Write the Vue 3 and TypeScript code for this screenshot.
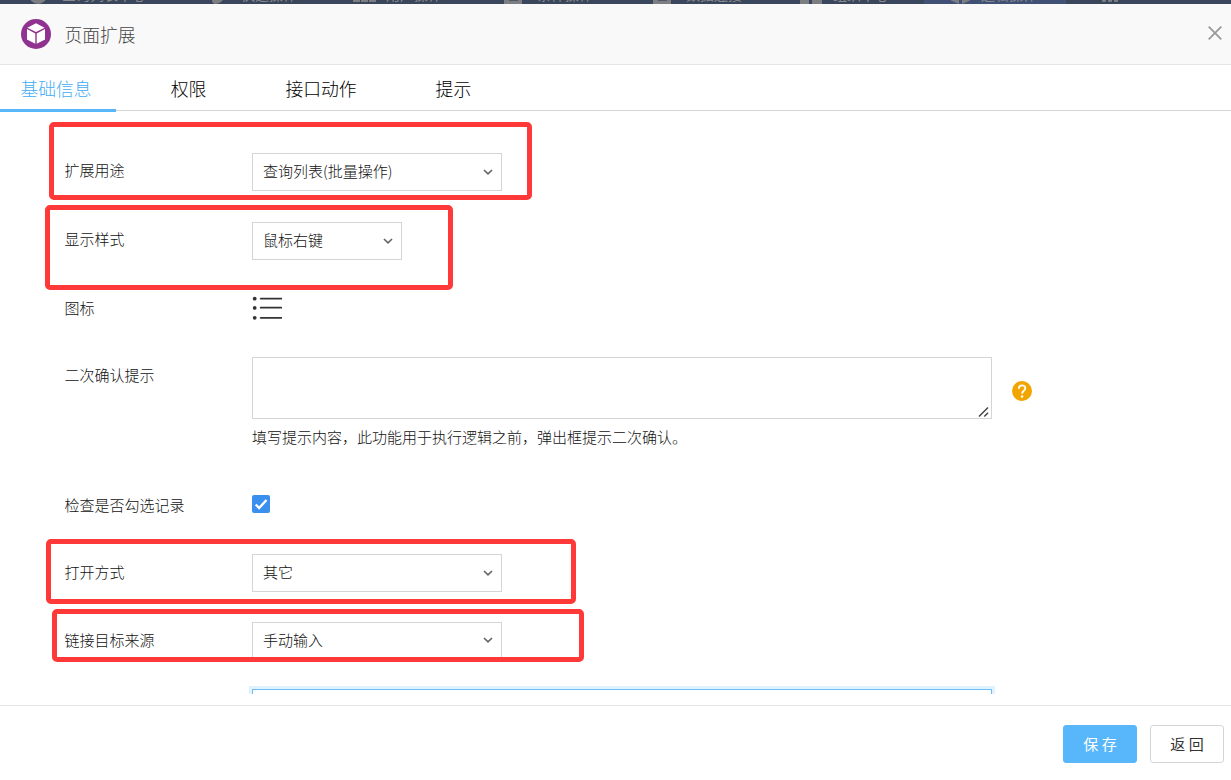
<script setup lang="ts">
import { ref } from 'vue'

interface NavItem { label: string; kind: string; active?: boolean; start: number }

const navItems: NavItem[] = [
  { label: '查询列表中心', kind: 'dot', start: 29 },
  { label: '快速操作', kind: 'tag', start: 208 },
  { label: '用户操作', kind: 'grid', start: 353 },
  { label: '条件操作', kind: 'box', start: 504 },
  { label: '数据连接', kind: 'box', start: 653 },
  { label: '组织中心', kind: 'bars', start: 800 },
  { label: '逻辑操作', kind: 'cube', active: true, start: 924 },
  { label: '', kind: 'flow', start: 1101 },
]

const tabs = ['基础信息', '权限', '接口动作', '提示']
const currentTab = ref('基础信息')
const prompt = ref('')
const target = ref('')
const mustSelect = ref(true)
</script>

<template>
  <div class="page">
    <nav class="backdrop">
      <div v-for="n in navItems" :key="n.start" class="nav-item" :class="[n.kind, { active: n.active }]" :style="{ left: n.start + 'px' }">
        <i class="nav-icon"></i><span>{{ n.label }}</span>
      </div>
    </nav>

    <header class="header">
      <svg class="logo" viewBox="0 0 30 30">
        <circle cx="15" cy="15" r="15" fill="#8f3290" />
        <path d="M15 4.2 23.6 8.7 15 13.1 6.4 8.7Z" fill="#fff" />
        <path d="M6 10 14.3 14.4V24.7L6 20.5ZM24 10 15.7 14.4V24.7L24 20.5Z" fill="#fff" />
      </svg>
      <h1>页面扩展</h1>
      <svg class="close" viewBox="0 0 14 14"><path d="M.7.7 13.3 13.3M13.3.7.7 13.3" fill="none" stroke="#999" stroke-width="1.8" /></svg>
    </header>

    <div class="tabs">
      <button v-for="t in tabs" :key="t" class="tab" :class="{ on: t === currentTab }" @click="currentTab = t">{{ t }}</button>
    </div>

    <main class="form">
      <div class="row r1">
        <label>扩展用途</label>
        <div class="select">查询列表(批量操作)<svg viewBox="0 0 10 6"><path d="M1 1 5 4.8 9 1" /></svg></div>
      </div>
      <div class="row r2">
        <label>显示样式</label>
        <div class="select short">鼠标右键<svg viewBox="0 0 10 6"><path d="M1 1 5 4.8 9 1" /></svg></div>
      </div>
      <div class="row r3">
        <label>图标</label>
        <svg class="list-icon" viewBox="0 0 30 24">
          <g fill="#333"><circle cx="2.7" cy="2.7" r="1.9" /><circle cx="2.7" cy="11.9" r="1.9" /><circle cx="2.7" cy="21.8" r="1.9" /></g>
          <path d="M8.7 2.6H29.4M8.7 11.7H29.4M8.7 21.8H29.4" stroke="#333" stroke-width="1.8" stroke-linecap="round" />
        </svg>
      </div>
      <div class="row r4">
        <label>二次确认提示</label>
        <div class="prompt">
          <div class="area">
            <textarea v-model="prompt"></textarea>
            <svg class="grip" viewBox="0 0 12 12"><path d="M1 10.5 10 1.5M6.3 10.5 10 6.8" fill="none" stroke="#444" stroke-width="1.5" /></svg>
          </div>
          <p>填写提示内容，此功能用于执行逻辑之前，弹出框提示二次确认。</p>
        </div>
        <svg class="help" viewBox="0 0 20 20">
          <circle cx="10" cy="10" r="10" fill="#f2a500" />
          <path d="M6.8 7.7C6.8 3.2 13.3 3.4 13.3 7.2 13.3 9.8 10.1 9.8 10.1 12.8" fill="none" stroke="#fff" stroke-width="1.8" />
          <circle cx="10.1" cy="15.4" r="1.25" fill="#fff" />
        </svg>
      </div>
      <div class="row r5">
        <label>检查是否勾选记录</label>
        <button class="check" @click="mustSelect = !mustSelect">
          <svg v-if="mustSelect" viewBox="0 0 18 18"><path d="M3.7 9.5 7.1 13 14.5 5" fill="none" stroke="#fff" stroke-width="2.4" /></svg>
        </button>
      </div>
      <div class="row r6">
        <label>打开方式</label>
        <div class="select">其它<svg viewBox="0 0 10 6"><path d="M1 1 5 4.8 9 1" /></svg></div>
      </div>
      <div class="row r7">
        <label>链接目标来源</label>
        <div class="select">手动输入<svg viewBox="0 0 10 6"><path d="M1 1 5 4.8 9 1" /></svg></div>
      </div>
      <div class="row r8">
        <label></label>
        <textarea v-model="target" class="focused"></textarea>
      </div>
    </main>

    <footer class="footer">
      <button class="btn primary">保 存</button>
      <button class="btn">返 回</button>
    </footer>

    <div class="mark m1"></div>
    <div class="mark m2"></div>
    <div class="mark m3"></div>
    <div class="mark m4"></div>
  </div>
</template>

<style>
html, body { margin: 0; overflow: hidden; }
</style>

<style scoped>
* { box-sizing: border-box; }
.page {
  position: relative; width: 1231px; height: 780px; overflow: hidden; background: #fff;
  display: flex; flex-direction: column;
  font: 300 15px/20px "Noto Sans CJK SC", "Liberation Sans", sans-serif; color: #111;
}
button { font: inherit; border: 0; background: none; padding: 0; }
.backdrop { position: relative; flex: none; height: 4px; background: #39465b; overflow: hidden; }
.nav-item { position: absolute; bottom: 0; height: 40px; font-size: 14px; font-weight: 400; color: #898a8b; white-space: nowrap; }
.nav-item span { position: absolute; left: 33px; bottom: 0; line-height: 20px; }
.nav-icon { position: absolute; left: 0; bottom: 0; width: 18px; height: 16px; background: #7c7e82; border-radius: 0 0 9px 9px; }
.tag .nav-icon { left: 4px; width: 12px; border-radius: 0 0 9px 4px; }
.grid .nav-icon { bottom: 2px; width: 24px; border-radius: 0; background: repeating-linear-gradient(90deg, #7c7e82 0 7px, #39465b 7px 8px); }
.box .nav-icon { border-radius: 0; background: linear-gradient(#4f5869, #4f5869) 5px 12px / 9px 1px no-repeat, #7c7e82; }
.bars .nav-icon { width: 22px; border-radius: 0; background: linear-gradient(90deg, #7c7e82 0 9px, #39465b 9px 12px, #7c7e82 12px); }
.nav-item.active { width: 142px; background: #415176; }
.active span { left: 57px; }
.active .nav-icon { left: 27px; width: 19px; height: 4px; border-radius: 0; clip-path: polygon(0 0, 8px 0, 8px 100%, 0 10%, 0 0, 11px 0, 19px 0, 19px 10%, 11px 100%, 11px 0); }
.flow .nav-icon { bottom: 2px; height: 4px; background: radial-gradient(circle, #7c7e82 2px, transparent 2.5px) 0 0 / 6px 4px; border-radius: 0; }
.header {
  flex: none; height: 61px; display: flex; align-items: center; padding: 0 9px 0 21px;
  background: #f9f9f9; border-bottom: 1px solid #e6e6e6;
}
.logo { width: 30px; height: 30px; }
h1 { margin: 0 auto 1px 13.5px; font-size: 17.8px; font-weight: 300; line-height: 24px; color: #444; }
.close { width: 14px; height: 14px; margin-bottom: 3px; }
.tabs { flex: none; display: flex; height: 46px; border-bottom: 1px solid #d5d5d5; gap: 34.2px; }
.tab { height: 47px; padding: 2px 24.4px 1px 20.5px; font-size: 17.8px; line-height: 24px; color: #000; border-bottom: 3px solid transparent; white-space: nowrap; }
.tab.on { color: #45adf5; border-color: #58b7fa; }
.form { flex: none; height: 583px; padding-top: 42px; overflow: hidden; }
.row { display: flex; align-items: flex-start; }
.row > label { flex: none; width: 187.5px; margin-left: 64.5px; padding-top: 7px; height: 27px; white-space: nowrap; }
.r1, .r2 { height: 69px; }
.r3 { height: 66px; }
.r4 { height: 127px; }
.r5 { height: 70px; }
.r6 { height: 68px; }
.r7 { height: 67px; }
.row.r4 > label, .row.r6 > label, .row.r7 > label { padding-top: 8px; }
.row.r5 > label { padding-top: 11px; }
.select {
  width: 250px; height: 38px; padding: 0 8px 2px 10px; border: 1px solid #d5d5d5; background: #fff;
  display: flex; align-items: center; justify-content: space-between; line-height: 20px;
}
.select.short { width: 150px; }
.select svg { width: 10px; height: 6px; margin-top: 2px; fill: none; stroke: #666; stroke-width: 1.7; }
.r7 .select svg { margin-top: 0; }
.list-icon { width: 30px; height: 24px; margin-top: 5px; }
.prompt { width: 740px; }
.area { position: relative; height: 62px; }
textarea { display: block; width: 740px; height: 62px; border: 1px solid #d5d5d5; resize: none; outline: 0; background: #fff; }
.grip { position: absolute; right: 2px; bottom: 1px; width: 12px; height: 12px; }
.prompt p { margin: 8px 0 0; line-height: 20px; }
.help { width: 20px; height: 20px; margin: 24px 0 0 20px; }
.check { width: 18px; height: 18px; margin-top: 11px; background: #3b8fee; border-radius: 2px; }
.check svg { display: block; }
.focused { border-color: #6cbdf5; box-shadow: 0 0 0 3px #e0f2fd; }
.footer { flex: none; height: 75px; margin-top: 11px; padding: 19px 7px 0 0; border-top: 1px solid #e6e6e6; display: flex; justify-content: flex-end; gap: 13px; }
.btn { width: 74px; height: 38px; border: 1px solid #d5d5d5; border-radius: 3px; font-weight: 400; color: #333; }
.primary { background: #58b7fa; border-color: #58b7fa; color: #fff; }
.mark { position: absolute; border: 5px solid #ff3838; border-radius: 5px; pointer-events: none; }
.m1 { left: 49px; top: 122px; width: 483px; height: 78px; }
.m2 { left: 45px; top: 205px; width: 408.4px; height: 85px; }
.m3 { left: 46px; top: 539px; width: 530px; height: 65px; }
.m4 { left: 52px; top: 609px; width: 532px; height: 53px; }
</style>
